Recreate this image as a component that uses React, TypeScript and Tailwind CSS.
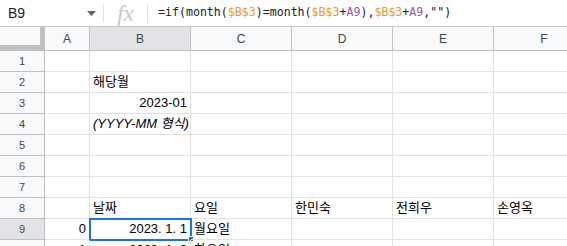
import React from "react";

const cols = ["A", "B", "C", "D", "E", "F"];
const widths = ["w-[45px]", "w-[101px]", "w-[101px]", "w-[101px]", "w-[101px]", "w-[101px]"];

type Cell = { text: string; align?: "right"; italic?: boolean };

const rows: Record<number, Record<string, Cell>> = {
  2: { B: { text: "해당월" } },
  3: { B: { text: "2023-01", align: "right" } },
  4: { B: { text: "(YYYY-MM 형식)", italic: true } },
  8: {
    B: { text: "날짜" },
    C: { text: "요일" },
    D: { text: "한민숙" },
    E: { text: "전희우" },
    F: { text: "손영옥" },
  },
  9: {
    A: { text: "0", align: "right" },
    B: { text: "2023. 1. 1", align: "right" },
    C: { text: "월요일" },
  },
  10: {
    A: { text: "1", align: "right" },
    B: { text: "2023. 1. 2", align: "right" },
    C: { text: "화요일" },
  },
};

const font = { fontFamily: "Arial, 'Liberation Sans', 'Noto Sans CJK KR', sans-serif" };

function FormulaBar() {
  return (
    <div className="flex h-[27px] items-center border-b border-[#c7c7c7] bg-white">
      <div className="flex w-[103px] items-center pl-[8px] pr-[7px] text-[14px] text-[#202124]">
        <span className="flex-1">B9</span>
        <svg width="9" height="5" viewBox="0 0 9 5">
          <path d="M0 0h9L4.5 5z" fill="#5f6368" />
        </svg>
      </div>
      <div className="h-[18px] w-px bg-[#e0e0e0]" />
      <div
        className="w-[43px] text-center text-[23px] italic leading-none text-[#c7c9cc]"
        style={{ fontFamily: "'Liberation Serif', serif" }}
      >
        fx
      </div>
      <div className="h-[18px] w-px bg-[#e0e0e0]" />
      <div
        className="pl-[10px] text-[11.6px] text-[#202124]"
        style={{ fontFamily: "'DejaVu Sans Mono', 'Liberation Mono', monospace" }}
      >
        =if(month(<span className="text-[#f7981d]">$B$3</span>)=month(
        <span className="text-[#f7981d]">$B$3</span>+<span className="text-[#9c4fb0]">A9</span>),
        <span className="text-[#f7981d]">$B$3</span>+<span className="text-[#9c4fb0]">A9</span>,"")
      </div>
    </div>
  );
}

function HeaderRow() {
  return (
    <div className="flex h-[24px]">
      <div className="relative w-[45px] shrink-0 border-b border-r border-[#c0c0c0] bg-[#f8f9fa]">
        <div className="absolute right-0 top-0 h-full w-[4px] bg-[#c0c0c0]" />
        <div className="absolute bottom-0 left-0 h-[5px] w-full bg-[#c0c0c0]" />
      </div>
      {cols.map((c, i) => (
        <div
          key={c}
          className={`${widths[i]} flex shrink-0 items-center justify-center border-b border-r border-[#c0c0c0] text-[12px] text-[#444746] ${
            c === "B" ? "bg-[#e1e3e6]" : "bg-[#f8f9fa]"
          }`}
        >
          {c}
        </div>
      ))}
    </div>
  );
}

function Row({ n }: { n: number }) {
  const data = rows[n] || {};
  return (
    <div className="flex h-[21px]">
      <div
        className={`flex w-[45px] shrink-0 items-center justify-center border-b border-r border-[#c0c0c0] text-[11px] text-[#444746] ${
          n === 9 ? "bg-[#e1e3e6]" : "bg-[#f8f9fa]"
        }`}
      >
        {n}
      </div>
      {cols.map((c, i) => {
        const cell = data[c];
        const selected = n === 9 && c === "B";
        return (
          <div
            key={c}
            className={`${widths[i]} relative flex shrink-0 items-end overflow-visible whitespace-nowrap border-b border-r border-[#e2e2e2] px-[3px] pb-[2px] text-[13px] leading-[17px] text-black ${
              cell?.align === "right" ? "justify-end" : "justify-start"
            } ${cell?.italic ? "italic" : ""}`}
          >
            {cell?.text}
            {selected && (
              <>
                <div className="absolute -left-px -top-px h-[23px] w-[103px] border-2 border-[#1a73e8]" />
                <div className="absolute -bottom-[3px] -right-[4px] h-[6px] w-[6px] border border-white bg-[#1a73e8]" />
              </>
            )}
          </div>
        );
      })}
    </div>
  );
}

export default function App() {
  return (
    <div className="h-[246px] w-[567px] overflow-hidden bg-white" style={font}>
      <FormulaBar />
      <HeaderRow />
      {[1, 2, 3, 4, 5, 6, 7, 8, 9, 10].map((n) => (
        <Row key={n} n={n} />
      ))}
    </div>
  );
}
